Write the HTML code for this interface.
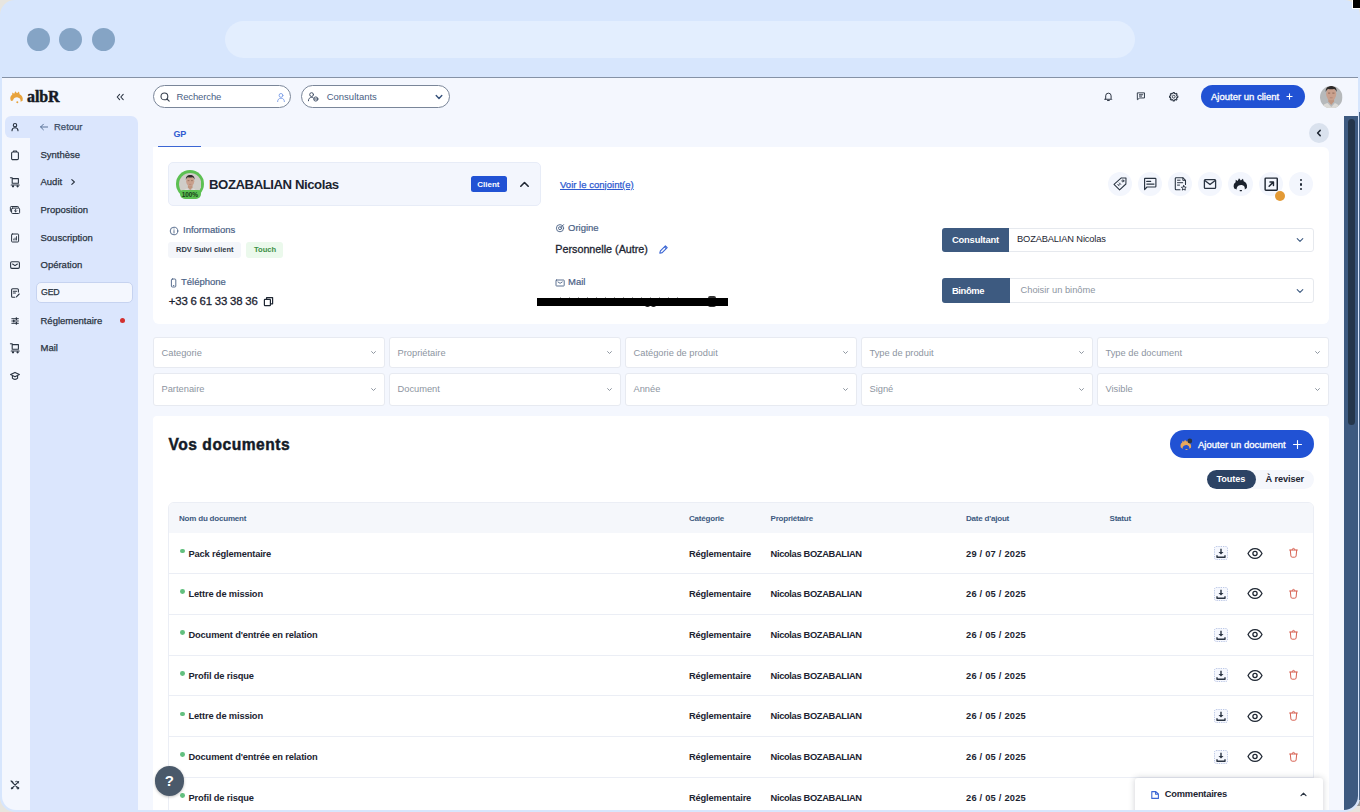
<!DOCTYPE html>
<html lang="fr">
<head>
<meta charset="utf-8">
<title>albR</title>
<style>
*{box-sizing:border-box;margin:0;padding:0}
html,body{width:1360px;height:812px;overflow:hidden;background:#e7e5df;font-family:"Liberation Sans",sans-serif;color:#1f2733}
.abs{position:absolute}
#win{left:0;top:0;width:1359.500px;height:811.500px;background:#d7e6fd;border-radius:15px 16px 15px 15px}
#chrome{left:0;top:0;width:1360px;height:77px}
.dot{position:absolute;top:27.5px;width:23px;height:23px;border-radius:50%;background:#85a4c5}
#url{left:225px;top:21px;width:910px;height:37px;border-radius:19px;background:#e3eefe}
#sep{left:2px;top:77px;width:1356px;height:1px;background:#8592a6}
#app{left:1.500px;top:78px;width:1356.500px;height:731.500px;background:#f4f7fe;border-radius:0 0 14px 14px;overflow:hidden}
/* everything inside #app is positioned with page coords via wrapper offset */
#pg{position:absolute;left:-1.500px;top:-78px;width:1360px;height:812px}
.t{position:absolute;white-space:nowrap;line-height:1}
.nav{font-size:9.500px;color:#2a3442;-webkit-text-stroke:.25px #2a3442}
.circ{position:absolute;top:172.300px;width:24.200px;height:24.200px;border-radius:50%;background:#f3f6fd}
.lbl{font-size:9.500px;color:#4a6185;-webkit-text-stroke:.2px #4a6185}
.flt{position:absolute;height:32.500px;background:#fff;border:1px solid #e7eaf1;border-radius:3px}
.th{font-size:8px;font-weight:700;color:#3d5a80;letter-spacing:-.2px;margin-top:.6px}
.td{font-size:9.300px;font-weight:700;color:#1c2431;letter-spacing:-.15px}
</style>
</head>
<body>
<div class="abs" style="left:1340px;top:792px;width:20px;height:14px;background:#9b9b99"></div>
<div id="win" class="abs"></div>
<div class="abs" style="left:1359.200px;top:112px;width:1px;height:688px;background:#4a668a"></div>
<div class="abs" style="left:1351.500px;top:-1px;width:10px;height:9.500px;background:#000;border:.700px solid #fff"></div>
<div id="chrome" class="abs">
  <div class="dot" style="left:26.5px"></div>
  <div class="dot" style="left:59px"></div>
  <div class="dot" style="left:92px"></div>
  <div id="url" class="abs"></div>
</div>
<div id="sep" class="abs"></div>
<div id="app" class="abs"><div id="pg">
<!--SIDEBAR-->
<div class="abs" style="left:30px;top:116px;width:108px;height:700px;background:#dbe6fd;border-radius:0 7px 0 0"></div>
<div class="abs" style="left:5px;top:116px;width:30px;height:22px;background:#dbe6fd;border-radius:6px 0 0 6px"></div>
<!-- logo -->
<svg class="abs" style="left:8.500px;top:88.500px" width="17" height="16" viewBox="0 0 17 16"><path d="M2 12c-1.400-2.600-.6-5 1.200-6.200l.1-2.300 1.900 1.200 1.100-2.500 1.700 2.100 2-1.700.6 2.600c2.400.9 3.700 3.400 3 6.500l-2 1c.3-2.400-.8-4-2.900-4.300-2.200-.3-4.200.8-4.700 3.100z" fill="#e8a33d"/><circle cx="8.300" cy="13.200" r="1" fill="#e8a33d"/></svg>
<div class="t" style="left:27px;top:88.500px;font-family:'Liberation Serif',serif;font-weight:700;font-size:16px;color:#151a24;letter-spacing:-.1px;-webkit-text-stroke:.45px #151a24">albR</div>
<svg class="abs" style="left:115px;top:92px" width="10" height="10" viewBox="0 0 10 10" fill="none" stroke="#2a3442" stroke-width="1.100" stroke-linecap="round" stroke-linejoin="round"><path d="M4.600 2.400 2.200 5l2.400 2.600M8.200 2.400 5.800 5l2.400 2.600"/></svg>
<!-- icon column -->
<g></g>
<svg class="abs" style="left:9px;top:121px" width="12" height="12" viewBox="0 0 12 12" fill="none" stroke="#2a3442" stroke-width="1.100" stroke-linecap="round"><circle cx="6" cy="4.200" r="1.700"/><path d="M3 9.800c0-2 1.300-3 3-3s3 1 3 3"/></svg>
<svg class="abs" style="left:9px;top:148.500px" width="12" height="12" viewBox="0 0 12 12" fill="none" stroke="#2a3442" stroke-width="1.100" stroke-linejoin="round"><rect x="2.600" y="3" width="6.800" height="7.600" rx="1.200"/><path d="M4.500 3V2h3v1"/></svg>
<svg class="abs" style="left:9px;top:176px" width="12" height="12" viewBox="0 0 12 12" fill="none" stroke="#2a3442" stroke-width="1.100" stroke-linecap="round" stroke-linejoin="round"><path d="M1.400 1.800h1.800v5.400h6.200V2.600H3.200M2.200 9h8"/><circle cx="4" cy="10.300" r=".6" fill="#2a3442"/><circle cx="8.600" cy="10.300" r=".6" fill="#2a3442"/></svg>
<svg class="abs" style="left:9px;top:204px" width="12" height="12" viewBox="0 0 12 12" fill="none" stroke="#2a3442" stroke-width="1" stroke-linecap="round" stroke-linejoin="round"><path d="M2.200 7.600c-.5 0-.8-.3-.8-.8V3.300c0-.5.300-.8.800-.8h6.600c.5 0 .8.300.8.800"/><rect x="2.600" y="4.100" width="8" height="5.400" rx="1"/><path d="M6.600 5.400v2.400M5.400 6.700l1.200 1.200 1.200-1.200" stroke-width=".9"/></svg>
<svg class="abs" style="left:9px;top:231.500px" width="12" height="12" viewBox="0 0 12 12" fill="none" stroke="#2a3442" stroke-width="1" stroke-linecap="round" stroke-linejoin="round"><rect x="2.600" y="2" width="7" height="8" rx=".7"/><path d="M4.800 8V7M6.100 8V6M7.500 8V4.600" stroke-width=".9"/></svg>
<svg class="abs" style="left:9px;top:259px" width="12" height="12" viewBox="0 0 12 12" fill="none" stroke="#2a3442" stroke-width="1.100" stroke-linecap="round" stroke-linejoin="round"><rect x="1.600" y="2.800" width="8.800" height="6.600" rx="1.300"/><path d="M3.600 5l2.400 1.600L8.400 5"/></svg>
<svg class="abs" style="left:9px;top:287px" width="12" height="12" viewBox="0 0 12 12" fill="none" stroke="#2a3442" stroke-width="1.100" stroke-linecap="round" stroke-linejoin="round"><path d="M9.400 5V2.800c0-.6-.4-1-1-1H3.600c-.6 0-1 .4-1 1v6.400c0 .6.400 1 1 1h2.200M4.400 4.200h3.200M4.400 6h2M7.400 9.800l2.800-2.800"/></svg>
<svg class="abs" style="left:9px;top:314.500px" width="12" height="12" viewBox="0 0 12 12" fill="none" stroke="#2a3442" stroke-width="1.100" stroke-linecap="round"><path d="M2.800 3.700h6.600M2.800 6h6.600M2.800 8.300h6.600" stroke-width="1"/><path d="M7.400 2.900v1.600M4.800 5.200v1.600M7.400 7.500v1.600" stroke-width="1.500"/></svg>
<svg class="abs" style="left:9px;top:342px" width="12" height="12" viewBox="0 0 12 12" fill="none" stroke="#2a3442" stroke-width="1.100" stroke-linecap="round" stroke-linejoin="round"><path d="M1.400 1.800h1.800v5.400h6.200V2.600H3.200M2.200 9h8"/><circle cx="4" cy="10.300" r=".6" fill="#2a3442"/><circle cx="8.600" cy="10.300" r=".6" fill="#2a3442"/></svg>
<svg class="abs" style="left:9px;top:370px" width="12" height="12" viewBox="0 0 12 12" fill="none" stroke="#2a3442" stroke-width="1.100" stroke-linecap="round" stroke-linejoin="round"><path d="M6 2.400 1.600 4.600 6 6.800l4.400-2.200zM3.400 5.600v2.600c.6.800 1.600 1.200 2.600 1.200s2-.4 2.600-1.200V5.600"/></svg>
<svg class="abs" style="left:9px;top:779px" width="12" height="12" viewBox="0 0 12 12" fill="none" stroke="#2a3442" stroke-width="1.200" stroke-linecap="round" stroke-linejoin="round"><path d="M2.400 2.400l7 7.200M9.600 2.600 2.600 9.600"/><path d="M6.600 2.600c1.200-.8 2.800-.2 3 1.400" stroke-width="1"/><path d="M2 2l1.600.4.400 1.600" stroke-width="1"/><circle cx="8.800" cy="9" r=".9" stroke-width=".9"/><circle cx="3" cy="9.200" r=".7" stroke-width=".9"/></svg>
<!-- nav items -->
<svg class="abs" style="left:39px;top:122px" width="10" height="10" viewBox="0 0 10 10" fill="none" stroke="#5a7397" stroke-width="1" stroke-linecap="round" stroke-linejoin="round"><path d="M8.600 5H1.600M4.400 2.200 1.600 5l2.800 2.800"/></svg>
<div class="t nav" style="left:54px;top:122px;color:#4a6185;font-weight:400">Retour</div>
<div class="t nav" style="left:40.500px;top:149.500px">Synthèse</div>
<div class="t nav" style="left:40.500px;top:177px">Audit</div>
<svg class="abs" style="left:69px;top:178px" width="8" height="8" viewBox="0 0 8 8" fill="none" stroke="#2a3442" stroke-width="1.100" stroke-linecap="round" stroke-linejoin="round"><path d="M2.800 1.600 5.400 4 2.800 6.400"/></svg>
<div class="t nav" style="left:40.500px;top:205px">Proposition</div>
<div class="t nav" style="left:40.500px;top:232.500px">Souscription</div>
<div class="t nav" style="left:40.500px;top:260px">Opération</div>
<div class="abs" style="left:35.700px;top:281.900px;width:97.600px;height:21.600px;background:#f4f7fe;border:1px solid #c6d3f0;border-radius:5px"></div>
<div class="t nav" style="left:41px;top:288.300px;font-size:8.800px;letter-spacing:-.2px">GED</div>
<div class="t nav" style="left:40.500px;top:315.500px">Réglementaire</div>
<div class="abs" style="left:120.300px;top:318px;width:5px;height:5px;border-radius:50%;background:#d3302f"></div>
<div class="t nav" style="left:40.500px;top:343px">Mail</div>

<!--HEADER-->
<div class="abs" style="left:153px;top:85px;width:138px;height:23px;border:1px solid #7a8699;border-radius:12px;background:#fff"></div>
<svg class="abs" style="left:159px;top:91px" width="12" height="12" viewBox="0 0 12 12" fill="none" stroke="#343e4c" stroke-width="1.100" stroke-linecap="round"><circle cx="5.400" cy="5.400" r="3.400"/><path d="M8 8l2.200 2.200"/></svg>
<div class="t" style="left:176.400px;top:92px;font-size:9.500px;color:#4a6185;letter-spacing:-.12px">Recherche</div>
<svg class="abs" style="left:276px;top:91.500px" width="10" height="11" viewBox="0 0 10 11" fill="none" stroke="#86a5e8" stroke-width="1" stroke-linecap="round"><circle cx="5" cy="3.400" r="1.900"/><path d="M1.600 9.600c0-2.200 1.500-3.400 3.400-3.400s3.400 1.200 3.400 3.400"/></svg>
<div class="abs" style="left:300.500px;top:85px;width:149px;height:23px;border:1px solid #7a8699;border-radius:12px;background:#fff"></div>
<svg class="abs" style="left:307px;top:91px" width="13" height="12" viewBox="0 0 13 12" fill="none" stroke="#445268" stroke-width="1" stroke-linecap="round"><circle cx="4.600" cy="3.600" r="1.900"/><path d="M1.400 9.800c0-2.200 1.400-3.400 3.200-3.400.6 0 1.200.1 1.600.4"/><circle cx="8.800" cy="8" r="2.100"/><path d="M7.400 8h2.800"/></svg>
<div class="t" style="left:326.700px;top:91.800px;font-size:9.500px;color:#4a6185">Consultants</div>
<svg class="abs" style="left:433.500px;top:91.700px" width="10" height="10" viewBox="0 0 10 10" fill="none" stroke="#34507a" stroke-width="1.400" stroke-linecap="round" stroke-linejoin="round"><path d="M2.200 3.600 5 6.400l2.800-2.800"/></svg>
<!-- right icons -->
<svg class="abs" style="left:1102.500px;top:91.400px" width="10.800" height="10.800" viewBox="0 0 12 12" fill="none" stroke="#2a3442" stroke-width="1.100" stroke-linecap="round" stroke-linejoin="round"><path d="M3 8.400V5.400a3 3 0 0 1 6 0v3l.8.800H2.200zM5 10.600h2"/></svg>
<svg class="abs" style="left:1136.100px;top:91.400px" width="10.200" height="10.200" viewBox="0 0 12 12" fill="none" stroke="#2a3442" stroke-width="1.100" stroke-linecap="round" stroke-linejoin="round"><path d="M2 2.200h8v6H4.400L2 10zM4 4.400h4M4 6h2.600"/></svg>
<svg class="abs" style="left:1167.500px;top:90.500px" width="12" height="12" viewBox="0 0 12 12" fill="none" stroke="#2a3442" stroke-width="1.050" stroke-linejoin="round"><path d="M9.85 5.04L9.85 6.36L8.91 6.47L8.51 7.42L9.10 8.17L8.17 9.10L7.42 8.51L6.47 8.91L6.36 9.85L5.04 9.85L4.93 8.91L3.98 8.51L3.23 9.10L2.30 8.17L2.89 7.42L2.49 6.47L1.55 6.36L1.55 5.04L2.49 4.93L2.89 3.98L2.30 3.23L3.23 2.30L3.98 2.89L4.93 2.49L5.04 1.55L6.36 1.55L6.47 2.49L7.42 2.89L8.17 2.30L9.10 3.23L8.51 3.98L8.91 4.93z"/><circle cx="5.700" cy="5.700" r="1.400" stroke-width=".9"/></svg>
<div class="abs" style="left:1201px;top:85.200px;width:104px;height:22.700px;border-radius:12px;background:#2152d4"></div>
<div class="t" style="left:1211px;top:91.500px;font-size:9.500px;color:#fff;-webkit-text-stroke:.3px #fff">Ajouter un client</div>
<svg class="abs" style="left:1285px;top:92px" width="9" height="9" viewBox="0 0 9 9" fill="none" stroke="#fff" stroke-width="1.100" stroke-linecap="round"><path d="M4.500 1.900v5.200M1.900 4.500h5.200"/></svg>
<!-- avatar -->
<svg class="abs" style="left:1320.300px;top:85.500px" width="22.500" height="22.500" viewBox="0 0 22.5 22.5"><defs><clipPath id="av1"><circle cx="11.250" cy="11.250" r="11.250"/></clipPath><filter id="av1b"><feGaussianBlur stdDeviation=".45"/></filter></defs><g clip-path="url(#av1)"><rect width="22.500" height="22.500" fill="#b6b9bb"/><g filter="url(#av1b)" transform="translate(0 -1.500)"><path d="M2.500 25c.3-5.500 2.200-5.600 5.200-6.600l3.600 4 3.600-4c3 1 4.900 3.100 5.200 6.600z" fill="#dcdad6"/><path d="M8.300 13.500h5.800v3.500l-2.900 3.600-2.900-3.600z" fill="#bf957f"/><ellipse cx="11.200" cy="9.300" rx="5.100" ry="6.500" fill="#c9a08d"/><path d="M5.800 7.400c-.4-3.600 1.800-5.900 5.400-5.900s5.900 2.300 5.400 5.900c-.6-1.900-1.500-2.700-2.600-3-1.700.5-3.900.5-5.600 0-1.100.3-2 1.100-2.600 3z" fill="#2e2a29"/><path d="M8 8.600h2.200M12.300 8.600h2.200" stroke="#6b4a3c" stroke-width=".9" opacity=".7"/><path d="M9.800 13.300h2.800" stroke="#9c6b5a" stroke-width=".7" opacity=".7"/></g></g></svg>
<!-- tab -->
<div class="t" style="left:173.600px;top:130.400px;font-size:9px;font-weight:700;color:#2f5bd0;letter-spacing:-.3px">GP</div>
<div class="abs" style="left:158px;top:145.500px;width:43px;height:1.500px;background:#3b66d4"></div>
<div class="abs" style="left:1308.500px;top:123px;width:20px;height:20px;border-radius:50%;background:#dae2ee"></div>
<svg class="abs" style="left:1313.500px;top:128px" width="10" height="10" viewBox="0 0 10 10" fill="none" stroke="#1f2733" stroke-width="1.500" stroke-linecap="round" stroke-linejoin="round"><path d="M6.200 2.400 3.600 5l2.600 2.600"/></svg>

<!--CARD1-->
<div class="abs" style="left:153px;top:147px;width:1176px;height:176.500px;background:#fff;border-radius:0 6px 6px 6px"></div>
<div class="abs" style="left:168px;top:162px;width:372.500px;height:43.500px;background:#f3f6fd;border:1px solid #e7ecf7;border-radius:5px"></div>
<!-- avatar with ring -->
<div class="abs" style="left:176px;top:170px;width:28px;height:28px;border-radius:50%;background:#5cc052"></div>
<svg class="abs" style="left:178.800px;top:172.600px" width="22.400" height="22.400" viewBox="0 0 22.5 22.5"><defs><clipPath id="av2"><circle cx="11.250" cy="11.250" r="11.250"/></clipPath><filter id="av2b"><feGaussianBlur stdDeviation=".45"/></filter></defs><g clip-path="url(#av2)"><rect width="22.500" height="22.500" fill="#cfccc8"/><g filter="url(#av2b)" transform="translate(2.300 .8) scale(.8)"><path d="M2.500 25c.3-5.500 2.200-5.600 5.200-6.600l3.600 4 3.600-4c3 1 4.900 3.100 5.200 6.600z" fill="#dcdad6"/><path d="M8.300 13.500h5.800v3.500l-2.900 3.600-2.900-3.600z" fill="#bf957f"/><ellipse cx="11.200" cy="9.300" rx="5.100" ry="6.500" fill="#c9a08d"/><path d="M5.800 7.400c-.4-3.600 1.800-5.900 5.400-5.900s5.900 2.300 5.400 5.900c-.6-1.900-1.500-2.700-2.600-3-1.700.5-3.900.5-5.600 0-1.100.3-2 1.100-2.600 3z" fill="#2e2a29"/><path d="M8 8.600h2.200M12.300 8.600h2.200" stroke="#6b4a3c" stroke-width=".9" opacity=".7"/><path d="M9.800 13.300h2.800" stroke="#9c6b5a" stroke-width=".7" opacity=".7"/></g></g></svg>
<div class="abs" style="left:179.800px;top:190.300px;width:20.800px;height:9px;border-radius:3px 3px 5px 5px;background:#5cc052"></div>
<div class="t" style="left:181.800px;top:191.500px;font-size:6.500px;font-weight:700;color:#17401a;letter-spacing:-.1px">100%</div>
<div class="t" style="left:209px;top:177.500px;font-size:13.200px;font-weight:700;color:#1c2431;letter-spacing:-.45px">BOZABALIAN Nicolas</div>
<div class="abs" style="left:470.500px;top:176px;width:36.500px;height:16px;border-radius:2.500px;background:#2152d4"></div>
<div class="t" style="left:477.300px;top:180.500px;font-size:8px;font-weight:700;color:#fff">Client</div>
<svg class="abs" style="left:518px;top:178px" width="13" height="13" viewBox="0 0 13 13" fill="none" stroke="#1f2733" stroke-width="1.600" stroke-linecap="round" stroke-linejoin="round"><path d="M2.800 8.200 6.500 4.500l3.700 3.700"/></svg>
<div class="t" style="left:560px;top:179.700px;font-size:9.550px;color:#2f5bd0;text-decoration:underline;-webkit-text-stroke:.25px #2f5bd0">Voir le conjoint(e)</div>
<!-- action circles -->
<div class="circ" style="left:1108px"></div><div class="circ" style="left:1138px"></div><div class="circ" style="left:1168.200px"></div><div class="circ" style="left:1198.300px"></div><div class="circ" style="left:1228.400px"></div><div class="circ" style="left:1258.700px"></div><div class="circ" style="left:1288.800px"></div>
<svg class="abs" style="left:1113px;top:177px" width="14" height="14" viewBox="0 0 14 14" fill="none" stroke="#2a3442" stroke-width="1.050" stroke-linejoin="round" stroke-linecap="round"><path d="M1 7.300 8.300.9l4.700.1-.1 6L6.600 12.900z"/><circle cx="9.900" cy="3.900" r="1" stroke-width=".9"/><path d="M4.700 7.300l1.500 1.600M6.300 5.900l1.500 1.600M5.500 8.100l1.500-1.400" stroke-width=".8"/></svg>
<svg class="abs" style="left:1143px;top:177px" width="14" height="14" viewBox="0 0 14 14" fill="none" stroke="#2a3442" stroke-width="1.150" stroke-linejoin="round" stroke-linecap="round"><path d="M1.800 1.300h10.400c.4 0 .7.300.7.700v7.300c0 .4-.3.700-.7.700H4L1.600 12.600V2c0-.4.100-.7.200-.7z"/><path d="M3.800 4.400h3.800" stroke-width="1.300"/><path d="M3.800 7.100h7.200"/></svg>
<svg class="abs" style="left:1173px;top:177px" width="14" height="14" viewBox="0 0 14 14" fill="none" stroke="#2a3442" stroke-width="1.100" stroke-linejoin="round" stroke-linecap="round"><path d="M7 12.700H3c-.4 0-.7-.3-.7-.700V1.400c0-.4.300-.7.700-.7h6.800l2.700 2.700v4"/><path d="M9.800.9v2.500h2.500" stroke-width=".9"/><path d="M4.500 3.200h2.600M4.500 5.700h5.200M4.500 8.100h2" stroke-width="1"/><path d="M10.80 8.60L11.53 10.09L13.18 10.33L11.99 11.49L12.27 13.12L10.80 12.35L9.33 13.12L9.61 11.49L8.42 10.33L10.07 10.09z" stroke-width=".95"/></svg>
<svg class="abs" style="left:1203.300px;top:177px" width="14" height="14" viewBox="0 0 14 14" fill="none" stroke="#2a3442" stroke-width="1.300" stroke-linejoin="round" stroke-linecap="round"><rect x="1.400" y="2.600" width="11.200" height="8.800" rx="1"/><path d="M1.800 3.400 7 7.600l5.200-4.200"/></svg>
<svg class="abs" style="left:1231.700px;top:175.800px" width="17.500" height="17.500" viewBox="0 0 16 16"><path d="M2 11.400c-1.100-2.600-.3-4.800 1.300-5.800l.1-2.100 1.800 1.100L6.400 2l1.700 2.100 1.900-1.700.7 2.500c2.300.8 3.500 3.100 2.900 6.100l-1.900 1.300c.3-2.400-.8-3.900-2.800-4.100-2.200-.2-4 .7-4.600 3-.1.400 0 .8.100 1.200z" fill="#1b222d"/><path d="M6.900 13.700c.7.400 1.600.4 2.300 0l-.3-.9H7.200z" fill="#1b222d"/></svg>
<svg class="abs" style="left:1263.600px;top:176.700px" width="14.400" height="14.400" viewBox="0 0 14 14" fill="none" stroke="#1f2733" stroke-width="1.400" stroke-linejoin="round" stroke-linecap="round"><rect x="1.100" y="1.100" width="11.800" height="11.800" rx=".7"/><path d="M5 9l4-4M5.800 4.800h3.400v3.400"/></svg>
<div class="abs" style="left:1299.700px;top:178.700px;width:2.600px;height:2.600px;border-radius:50%;background:#1f2733"></div>
<div class="abs" style="left:1299.700px;top:183.100px;width:2.600px;height:2.600px;border-radius:50%;background:#1f2733"></div>
<div class="abs" style="left:1299.700px;top:187.700px;width:2.600px;height:2.600px;border-radius:50%;background:#1f2733"></div>
<div class="abs" style="left:1274.700px;top:190.500px;width:10px;height:10px;border-radius:50%;background:#e39a35"></div>
<!-- info col 1 -->
<svg class="abs" style="left:168.500px;top:225.500px" width="10" height="10" viewBox="0 0 10 10" fill="none" stroke="#4a6185" stroke-width=".9" stroke-linecap="round"><circle cx="5" cy="5" r="3.800"/><path d="M5 4.600v2.400M5 3v.1"/></svg>
<div class="t lbl" style="left:183px;top:224.700px">Informations</div>
<div class="abs" style="left:168px;top:241.800px;width:73px;height:15.800px;border-radius:3px;background:#f4f6fa"></div>
<div class="t" style="left:176px;top:246.200px;font-size:7.500px;font-weight:700;color:#2f3947">RDV Suivi client</div>
<div class="abs" style="left:246px;top:241.800px;width:37px;height:15.800px;border-radius:3px;background:#ebf9ec"></div>
<div class="t" style="left:254px;top:246.200px;font-size:7.600px;font-weight:700;color:#3d8f45">Touch</div>
<svg class="abs" style="left:168.500px;top:277.500px" width="9" height="10" viewBox="0 0 9 10" fill="none" stroke="#4a6185" stroke-width=".9" stroke-linecap="round"><rect x="2.400" y="1" width="4.400" height="8" rx="1"/><path d="M4.300 7.600h.6"/></svg>
<div class="t lbl" style="left:181px;top:276.800px">Téléphone</div>
<div class="t" style="left:168.800px;top:295.500px;font-size:11.400px;color:#1c2431;-webkit-text-stroke:.3px #1c2431;letter-spacing:-.2px">+33 6 61 33 38 36</div>
<svg class="abs" style="left:262.500px;top:296px" width="11" height="11" viewBox="0 0 11 11" fill="none" stroke="#1f2733" stroke-width="1.200" stroke-linejoin="round"><rect x="1.400" y="3.400" width="6" height="6.200" rx=".6"/><path d="M3.600 3.400V1.600h6v6.200H7.400"/></svg>
<!-- info col 2 -->
<svg class="abs" style="left:555px;top:222.500px" width="10" height="10" viewBox="0 0 10 10" fill="none" stroke="#4a6185" stroke-width=".9" stroke-linecap="round" stroke-linejoin="round"><circle cx="5" cy="5.200" r="3.600"/><circle cx="5" cy="5.200" r="1.500"/><path d="M5.800 4.400 8.600 1.600"/></svg>
<div class="t lbl" style="left:568px;top:223px">Origine</div>
<div class="t" style="left:555.300px;top:244.100px;font-size:10.750px;color:#1c2431;-webkit-text-stroke:.3px #1c2431">Personnelle (Autre)</div>
<svg class="abs" style="left:658px;top:244px" width="11" height="11" viewBox="0 0 11 11" fill="none" stroke="#3b66d4" stroke-width="1.100" stroke-linejoin="round" stroke-linecap="round"><path d="M1.800 9.200l.6-2.400 5-5 1.800 1.800-5 5zM6.400 2.800l1.800 1.800"/></svg>
<svg class="abs" style="left:555px;top:277.500px" width="10" height="10" viewBox="0 0 10 10" fill="none" stroke="#4a6185" stroke-width=".9" stroke-linecap="round" stroke-linejoin="round"><rect x="1" y="2" width="8.200" height="6" rx=".6"/><path d="M3 4l2.100 1.300L7.200 4"/></svg>
<div class="t lbl" style="left:568px;top:277.200px">Mail</div>
<div class="abs" style="left:537px;top:298.300px;width:191px;height:7.800px;background:#000"></div>
<div class="abs" style="left:645px;top:304px;width:4.500px;height:3px;border-radius:0 0 2px 2px;background:#000;opacity:.85"></div>
<div class="abs" style="left:651px;top:304px;width:4.500px;height:3px;border-radius:0 0 2px 2px;background:#000;opacity:.85"></div>
<div class="abs" style="left:708px;top:296.300px;width:8px;height:10.500px;border-radius:2px;background:#000;opacity:.8"></div>
<div class="abs" style="left:560px;top:296.800px;width:120px;height:1.500px;background:repeating-linear-gradient(90deg,rgba(0,0,0,.35) 0 1px,transparent 1px 9px)"></div>
<!-- consultant / binome -->
<div class="abs" style="left:942px;top:227.500px;width:371.500px;height:24px;border:1px solid #e6e9ee;border-radius:3px;background:#fff"></div>
<div class="abs" style="left:942px;top:227.500px;width:66.700px;height:24px;border-radius:3px 0 0 3px;background:#3d5a80"></div>
<div class="t" style="left:952px;top:234.600px;font-size:9.400px;font-weight:700;color:#fff;letter-spacing:-.2px">Consultant</div>
<div class="t" style="left:1017px;top:234.500px;font-size:9.300px;color:#1c2431;letter-spacing:-.15px">BOZABALIAN Nicolas</div>
<svg class="abs" style="left:1295px;top:234.500px" width="10" height="10" viewBox="0 0 10 10" fill="none" stroke="#3d5a80" stroke-width="1.100" stroke-linecap="round" stroke-linejoin="round"><path d="M2.200 3.600 5 6.400l2.800-2.800"/></svg>
<div class="abs" style="left:942px;top:278px;width:371.500px;height:24.500px;border:1px solid #e6e9ee;border-radius:3px;background:#fff"></div>
<div class="abs" style="left:942px;top:278px;width:67.700px;height:24.500px;border-radius:3px 0 0 3px;background:#3d5a80"></div>
<div class="t" style="left:952px;top:285.700px;font-size:9.400px;font-weight:700;color:#fff;letter-spacing:-.4px">Binôme</div>
<div class="t" style="left:1020.500px;top:285.500px;font-size:9.300px;color:#8d959f">Choisir un binôme</div>
<svg class="abs" style="left:1295px;top:285.500px" width="10" height="10" viewBox="0 0 10 10" fill="none" stroke="#3d5a80" stroke-width="1.100" stroke-linecap="round" stroke-linejoin="round"><path d="M2.200 3.600 5 6.400l2.800-2.800"/></svg>

<!--FILTERS-->
<div class="flt" style="left:153px;top:336.700px;height:31.800px;width:231.5px"></div>
<div class="t" style="left:161.5px;top:348.6px;font-size:9.300px;color:#8d959f">Categorie</div>
<svg class="abs" style="left:369.5px;top:349px" width="7" height="7" viewBox="0 0 7 7" fill="none" stroke="#8d959f" stroke-width="1" stroke-linecap="round" stroke-linejoin="round"><path d="M1.600 2.600 3.500 4.500l1.900-1.900"/></svg>
<div class="flt" style="left:389px;top:336.700px;height:31.800px;width:231.5px"></div>
<div class="t" style="left:397.5px;top:348.6px;font-size:9.300px;color:#8d959f">Propriétaire</div>
<svg class="abs" style="left:605.5px;top:349px" width="7" height="7" viewBox="0 0 7 7" fill="none" stroke="#8d959f" stroke-width="1" stroke-linecap="round" stroke-linejoin="round"><path d="M1.600 2.600 3.500 4.500l1.900-1.900"/></svg>
<div class="flt" style="left:625px;top:336.700px;height:31.800px;width:231.5px"></div>
<div class="t" style="left:633.5px;top:348.6px;font-size:9.300px;color:#8d959f">Catégorie de produit</div>
<svg class="abs" style="left:841.5px;top:349px" width="7" height="7" viewBox="0 0 7 7" fill="none" stroke="#8d959f" stroke-width="1" stroke-linecap="round" stroke-linejoin="round"><path d="M1.600 2.600 3.500 4.500l1.900-1.900"/></svg>
<div class="flt" style="left:861px;top:336.700px;height:31.800px;width:231.5px"></div>
<div class="t" style="left:869.5px;top:348.6px;font-size:9.300px;color:#8d959f">Type de produit</div>
<svg class="abs" style="left:1077.5px;top:349px" width="7" height="7" viewBox="0 0 7 7" fill="none" stroke="#8d959f" stroke-width="1" stroke-linecap="round" stroke-linejoin="round"><path d="M1.600 2.600 3.500 4.500l1.900-1.900"/></svg>
<div class="flt" style="left:1097px;top:336.700px;height:31.800px;width:232px"></div>
<div class="t" style="left:1105.5px;top:348.6px;font-size:9.300px;color:#8d959f">Type de document</div>
<svg class="abs" style="left:1314px;top:349px" width="7" height="7" viewBox="0 0 7 7" fill="none" stroke="#8d959f" stroke-width="1" stroke-linecap="round" stroke-linejoin="round"><path d="M1.600 2.600 3.500 4.500l1.900-1.900"/></svg>
<div class="flt" style="left:153px;top:373.0px;width:231.5px"></div>
<div class="t" style="left:161.5px;top:385.0px;font-size:9.300px;color:#8d959f">Partenaire</div>
<svg class="abs" style="left:369.5px;top:386px" width="7" height="7" viewBox="0 0 7 7" fill="none" stroke="#8d959f" stroke-width="1" stroke-linecap="round" stroke-linejoin="round"><path d="M1.600 2.600 3.500 4.500l1.900-1.900"/></svg>
<div class="flt" style="left:389px;top:373.0px;width:231.5px"></div>
<div class="t" style="left:397.5px;top:385.0px;font-size:9.300px;color:#8d959f">Document</div>
<svg class="abs" style="left:605.5px;top:386px" width="7" height="7" viewBox="0 0 7 7" fill="none" stroke="#8d959f" stroke-width="1" stroke-linecap="round" stroke-linejoin="round"><path d="M1.600 2.600 3.500 4.500l1.900-1.900"/></svg>
<div class="flt" style="left:625px;top:373.0px;width:231.5px"></div>
<div class="t" style="left:633.5px;top:385.0px;font-size:9.300px;color:#8d959f">Année</div>
<svg class="abs" style="left:841.5px;top:386px" width="7" height="7" viewBox="0 0 7 7" fill="none" stroke="#8d959f" stroke-width="1" stroke-linecap="round" stroke-linejoin="round"><path d="M1.600 2.600 3.500 4.500l1.900-1.900"/></svg>
<div class="flt" style="left:861px;top:373.0px;width:231.5px"></div>
<div class="t" style="left:869.5px;top:385.0px;font-size:9.300px;color:#8d959f">Signé</div>
<svg class="abs" style="left:1077.5px;top:386px" width="7" height="7" viewBox="0 0 7 7" fill="none" stroke="#8d959f" stroke-width="1" stroke-linecap="round" stroke-linejoin="round"><path d="M1.600 2.600 3.500 4.500l1.900-1.900"/></svg>
<div class="flt" style="left:1097px;top:373.0px;width:232px"></div>
<div class="t" style="left:1105.5px;top:385.0px;font-size:9.300px;color:#8d959f">Visible</div>
<svg class="abs" style="left:1314px;top:386px" width="7" height="7" viewBox="0 0 7 7" fill="none" stroke="#8d959f" stroke-width="1" stroke-linecap="round" stroke-linejoin="round"><path d="M1.600 2.600 3.500 4.500l1.900-1.900"/></svg>

<!--DOCS-->
<div class="abs" style="left:153px;top:416px;width:1176px;height:400px;background:#fff;border-radius:4px 4px 0 0"></div>
<div class="t" style="left:168.500px;top:436.700px;font-size:15.600px;font-weight:700;color:#141b27;letter-spacing:.52px;-webkit-text-stroke:.45px #141b27">Vos documents</div>
<div class="abs" style="left:1170px;top:430.300px;width:144px;height:27.800px;border-radius:14px;background:#2152d4"></div>
<svg class="abs" style="left:1179px;top:436.500px" width="15" height="15" viewBox="0 0 15 15"><path d="M1.800 10.600c-.8-2.200 0-4.200 1.400-5l.2-1.800 1.600 1 1-2 1.400 1.800 1.800-1.400.4 2.200c2 .8 3 2.800 2.400 5.400l-1.600 1c.2-2-.8-3.600-2.600-3.800-2-.2-3.600.8-4.200 2.800 0 .4 0 .8.200 1.200z" fill="#e8a85c"/><circle cx="10.800" cy="4" r="2.400" fill="#2a3442"/><path d="M6.400 12.800c.6.400 1.600.4 2.200 0l-.2-.8H6.600z" fill="#e8a85c"/></svg>
<div class="t" style="left:1198px;top:439.500px;font-size:9.500px;color:#fff;-webkit-text-stroke:.3px #fff">Ajouter un document</div>
<svg class="abs" style="left:1291.500px;top:438.500px" width="11" height="11" viewBox="0 0 11 11" fill="none" stroke="#fff" stroke-width="1.100" stroke-linecap="round"><path d="M5.500 1.500v8M1.500 5.500h8"/></svg>
<div class="abs" style="left:1207px;top:470.400px;width:107px;height:18.200px;border-radius:9.500px;background:#f5f7fc"></div>
<div class="abs" style="left:1207px;top:470.400px;width:49px;height:18.200px;border-radius:9.500px;background:#2c4364"></div>
<div class="t" style="left:1216.500px;top:474.700px;font-size:9.200px;font-weight:700;color:#fff;letter-spacing:-.1px">Toutes</div>
<div class="t" style="left:1265.500px;top:474.700px;font-size:9.200px;font-weight:700;color:#1c2431;letter-spacing:-.1px">À reviser</div>
<!-- table -->
<div class="abs" style="left:168px;top:501.500px;width:1146px;height:320px;border:1px solid #ebeef5;border-radius:6px 6px 0 0;overflow:hidden"><div class="abs" style="left:0;top:0;width:1146px;height:30.800px;background:#f5f7fb"></div></div>
<div class="t th" style="left:179px;top:514px">Nom du document</div>
<div class="t th" style="left:689px;top:514px">Catégorie</div>
<div class="t th" style="left:770.500px;top:514px">Propriétaire</div>
<div class="t th" style="left:966px;top:514px">Date d'ajout</div>
<div class="t th" style="left:1109.500px;top:514px">Statut</div>
<div class="abs" style="left:180.400px;top:548.7px;width:4.800px;height:4.800px;border-radius:50%;background:#62c07f"></div>
<div class="t td" style="left:188.500px;top:549.5px">Pack réglementaire</div>
<div class="t td" style="left:689px;top:549.5px">Réglementaire</div>
<div class="t td" style="left:770.500px;top:549.5px;letter-spacing:-.33px">Nicolas BOZABALIAN</div>
<div class="t td" style="left:966px;top:549.5px;letter-spacing:.22px">29 / 07 / 2025</div>
<svg class="abs" style="left:1214px;top:546.1px" width="14" height="14" viewBox="0 0 14 14" fill="none"><rect x=".5" y=".5" width="13" height="13" rx="1.600" fill="#f6f8fe" stroke="#a3b3dc" stroke-width=".7" stroke-dasharray="1.300 1"/><path d="M7 2.800v4" stroke="#2a3442" stroke-width="1.400"/><path d="M4.500 5.900h5L7 8.500z" fill="#2a3442"/><path d="M3 9.200v2h8v-2" stroke="#2a3442" stroke-width="1.400" stroke-linejoin="round"/></svg>
<svg class="abs" style="left:1247px;top:545.7px" width="16" height="15" viewBox="0 0 16 15" fill="none" stroke="#1f2733" stroke-width="1.300" stroke-linejoin="round"><path d="M1 7.500C2.800 4 5.300 2.600 8 2.600S13.200 4 15 7.500C13.200 11 10.700 12.400 8 12.400S2.800 11 1 7.500z"/><circle cx="8" cy="7.500" r="2.100"/></svg>
<svg class="abs" style="left:1287.500px;top:547.1px" width="11" height="12" viewBox="0 0 11 12" fill="none" stroke="#d55a4a" stroke-width=".95" stroke-linecap="round" stroke-linejoin="round"><path d="M1.700 3h7.600M4.200 2.800c0-1 .5-1.400 1.300-1.400s1.300.4 1.300 1.400M2.300 3.200l.6 5.800c.1.800.6 1.200 1.300 1.200h2.600c.7 0 1.200-.4 1.300-1.200l.6-5.800"/></svg>
<div class="abs" style="left:169px;top:573.2px;width:1144px;height:1px;background:#ebeef5"></div>
<div class="abs" style="left:180.400px;top:589.4px;width:4.800px;height:4.800px;border-radius:50%;background:#62c07f"></div>
<div class="t td" style="left:188.500px;top:590.2px">Lettre de mission</div>
<div class="t td" style="left:689px;top:590.2px">Réglementaire</div>
<div class="t td" style="left:770.500px;top:590.2px;letter-spacing:-.33px">Nicolas BOZABALIAN</div>
<div class="t td" style="left:966px;top:590.2px;letter-spacing:.22px">26 / 05 / 2025</div>
<svg class="abs" style="left:1214px;top:586.8px" width="14" height="14" viewBox="0 0 14 14" fill="none"><rect x=".5" y=".5" width="13" height="13" rx="1.600" fill="#f6f8fe" stroke="#a3b3dc" stroke-width=".7" stroke-dasharray="1.300 1"/><path d="M7 2.800v4" stroke="#2a3442" stroke-width="1.400"/><path d="M4.500 5.900h5L7 8.500z" fill="#2a3442"/><path d="M3 9.200v2h8v-2" stroke="#2a3442" stroke-width="1.400" stroke-linejoin="round"/></svg>
<svg class="abs" style="left:1247px;top:586.4px" width="16" height="15" viewBox="0 0 16 15" fill="none" stroke="#1f2733" stroke-width="1.300" stroke-linejoin="round"><path d="M1 7.500C2.800 4 5.300 2.600 8 2.600S13.200 4 15 7.500C13.200 11 10.700 12.400 8 12.400S2.800 11 1 7.500z"/><circle cx="8" cy="7.500" r="2.100"/></svg>
<svg class="abs" style="left:1287.500px;top:587.8px" width="11" height="12" viewBox="0 0 11 12" fill="none" stroke="#d55a4a" stroke-width=".95" stroke-linecap="round" stroke-linejoin="round"><path d="M1.700 3h7.600M4.200 2.800c0-1 .5-1.400 1.300-1.400s1.300.4 1.300 1.400M2.300 3.200l.6 5.800c.1.800.6 1.200 1.300 1.200h2.600c.7 0 1.200-.4 1.300-1.200l.6-5.800"/></svg>
<div class="abs" style="left:169px;top:613.9px;width:1144px;height:1px;background:#ebeef5"></div>
<div class="abs" style="left:180.400px;top:630.1px;width:4.800px;height:4.800px;border-radius:50%;background:#62c07f"></div>
<div class="t td" style="left:188.500px;top:630.9px">Document d'entrée en relation</div>
<div class="t td" style="left:689px;top:630.9px">Réglementaire</div>
<div class="t td" style="left:770.500px;top:630.9px;letter-spacing:-.33px">Nicolas BOZABALIAN</div>
<div class="t td" style="left:966px;top:630.9px;letter-spacing:.22px">26 / 05 / 2025</div>
<svg class="abs" style="left:1214px;top:627.5px" width="14" height="14" viewBox="0 0 14 14" fill="none"><rect x=".5" y=".5" width="13" height="13" rx="1.600" fill="#f6f8fe" stroke="#a3b3dc" stroke-width=".7" stroke-dasharray="1.300 1"/><path d="M7 2.800v4" stroke="#2a3442" stroke-width="1.400"/><path d="M4.500 5.900h5L7 8.500z" fill="#2a3442"/><path d="M3 9.200v2h8v-2" stroke="#2a3442" stroke-width="1.400" stroke-linejoin="round"/></svg>
<svg class="abs" style="left:1247px;top:627.1px" width="16" height="15" viewBox="0 0 16 15" fill="none" stroke="#1f2733" stroke-width="1.300" stroke-linejoin="round"><path d="M1 7.500C2.800 4 5.300 2.600 8 2.600S13.200 4 15 7.500C13.200 11 10.700 12.400 8 12.400S2.800 11 1 7.500z"/><circle cx="8" cy="7.500" r="2.100"/></svg>
<svg class="abs" style="left:1287.500px;top:628.5px" width="11" height="12" viewBox="0 0 11 12" fill="none" stroke="#d55a4a" stroke-width=".95" stroke-linecap="round" stroke-linejoin="round"><path d="M1.700 3h7.600M4.200 2.800c0-1 .5-1.400 1.300-1.400s1.300.4 1.300 1.400M2.300 3.200l.6 5.800c.1.800.6 1.200 1.300 1.200h2.600c.7 0 1.200-.4 1.300-1.200l.6-5.800"/></svg>
<div class="abs" style="left:169px;top:654.6px;width:1144px;height:1px;background:#ebeef5"></div>
<div class="abs" style="left:180.400px;top:670.8px;width:4.800px;height:4.800px;border-radius:50%;background:#62c07f"></div>
<div class="t td" style="left:188.500px;top:671.6px">Profil de risque</div>
<div class="t td" style="left:689px;top:671.6px">Réglementaire</div>
<div class="t td" style="left:770.500px;top:671.6px;letter-spacing:-.33px">Nicolas BOZABALIAN</div>
<div class="t td" style="left:966px;top:671.6px;letter-spacing:.22px">26 / 05 / 2025</div>
<svg class="abs" style="left:1214px;top:668.2px" width="14" height="14" viewBox="0 0 14 14" fill="none"><rect x=".5" y=".5" width="13" height="13" rx="1.600" fill="#f6f8fe" stroke="#a3b3dc" stroke-width=".7" stroke-dasharray="1.300 1"/><path d="M7 2.800v4" stroke="#2a3442" stroke-width="1.400"/><path d="M4.500 5.900h5L7 8.500z" fill="#2a3442"/><path d="M3 9.200v2h8v-2" stroke="#2a3442" stroke-width="1.400" stroke-linejoin="round"/></svg>
<svg class="abs" style="left:1247px;top:667.8px" width="16" height="15" viewBox="0 0 16 15" fill="none" stroke="#1f2733" stroke-width="1.300" stroke-linejoin="round"><path d="M1 7.500C2.800 4 5.300 2.600 8 2.600S13.200 4 15 7.500C13.200 11 10.700 12.400 8 12.400S2.800 11 1 7.500z"/><circle cx="8" cy="7.500" r="2.100"/></svg>
<svg class="abs" style="left:1287.500px;top:669.2px" width="11" height="12" viewBox="0 0 11 12" fill="none" stroke="#d55a4a" stroke-width=".95" stroke-linecap="round" stroke-linejoin="round"><path d="M1.700 3h7.600M4.200 2.800c0-1 .5-1.400 1.300-1.400s1.300.4 1.300 1.400M2.300 3.200l.6 5.800c.1.800.6 1.200 1.300 1.200h2.600c.7 0 1.200-.4 1.300-1.200l.6-5.800"/></svg>
<div class="abs" style="left:169px;top:695.3px;width:1144px;height:1px;background:#ebeef5"></div>
<div class="abs" style="left:180.400px;top:711.5px;width:4.800px;height:4.800px;border-radius:50%;background:#62c07f"></div>
<div class="t td" style="left:188.500px;top:712.3px">Lettre de mission</div>
<div class="t td" style="left:689px;top:712.3px">Réglementaire</div>
<div class="t td" style="left:770.500px;top:712.3px;letter-spacing:-.33px">Nicolas BOZABALIAN</div>
<div class="t td" style="left:966px;top:712.3px;letter-spacing:.22px">26 / 05 / 2025</div>
<svg class="abs" style="left:1214px;top:708.9px" width="14" height="14" viewBox="0 0 14 14" fill="none"><rect x=".5" y=".5" width="13" height="13" rx="1.600" fill="#f6f8fe" stroke="#a3b3dc" stroke-width=".7" stroke-dasharray="1.300 1"/><path d="M7 2.800v4" stroke="#2a3442" stroke-width="1.400"/><path d="M4.500 5.900h5L7 8.500z" fill="#2a3442"/><path d="M3 9.200v2h8v-2" stroke="#2a3442" stroke-width="1.400" stroke-linejoin="round"/></svg>
<svg class="abs" style="left:1247px;top:708.5px" width="16" height="15" viewBox="0 0 16 15" fill="none" stroke="#1f2733" stroke-width="1.300" stroke-linejoin="round"><path d="M1 7.500C2.800 4 5.300 2.600 8 2.600S13.200 4 15 7.500C13.200 11 10.700 12.400 8 12.400S2.800 11 1 7.500z"/><circle cx="8" cy="7.500" r="2.100"/></svg>
<svg class="abs" style="left:1287.500px;top:709.9px" width="11" height="12" viewBox="0 0 11 12" fill="none" stroke="#d55a4a" stroke-width=".95" stroke-linecap="round" stroke-linejoin="round"><path d="M1.700 3h7.600M4.200 2.800c0-1 .5-1.400 1.300-1.400s1.300.4 1.300 1.400M2.300 3.200l.6 5.800c.1.800.6 1.200 1.300 1.200h2.600c.7 0 1.200-.4 1.300-1.200l.6-5.800"/></svg>
<div class="abs" style="left:169px;top:736.0px;width:1144px;height:1px;background:#ebeef5"></div>
<div class="abs" style="left:180.400px;top:752.2px;width:4.800px;height:4.800px;border-radius:50%;background:#62c07f"></div>
<div class="t td" style="left:188.500px;top:753.0px">Document d'entrée en relation</div>
<div class="t td" style="left:689px;top:753.0px">Réglementaire</div>
<div class="t td" style="left:770.500px;top:753.0px;letter-spacing:-.33px">Nicolas BOZABALIAN</div>
<div class="t td" style="left:966px;top:753.0px;letter-spacing:.22px">26 / 05 / 2025</div>
<svg class="abs" style="left:1214px;top:749.6px" width="14" height="14" viewBox="0 0 14 14" fill="none"><rect x=".5" y=".5" width="13" height="13" rx="1.600" fill="#f6f8fe" stroke="#a3b3dc" stroke-width=".7" stroke-dasharray="1.300 1"/><path d="M7 2.800v4" stroke="#2a3442" stroke-width="1.400"/><path d="M4.500 5.900h5L7 8.500z" fill="#2a3442"/><path d="M3 9.200v2h8v-2" stroke="#2a3442" stroke-width="1.400" stroke-linejoin="round"/></svg>
<svg class="abs" style="left:1247px;top:749.2px" width="16" height="15" viewBox="0 0 16 15" fill="none" stroke="#1f2733" stroke-width="1.300" stroke-linejoin="round"><path d="M1 7.500C2.800 4 5.300 2.600 8 2.600S13.200 4 15 7.500C13.200 11 10.700 12.400 8 12.400S2.800 11 1 7.500z"/><circle cx="8" cy="7.500" r="2.100"/></svg>
<svg class="abs" style="left:1287.500px;top:750.6px" width="11" height="12" viewBox="0 0 11 12" fill="none" stroke="#d55a4a" stroke-width=".95" stroke-linecap="round" stroke-linejoin="round"><path d="M1.700 3h7.600M4.200 2.800c0-1 .5-1.400 1.300-1.400s1.300.4 1.300 1.400M2.300 3.200l.6 5.800c.1.800.6 1.200 1.300 1.200h2.600c.7 0 1.200-.4 1.300-1.200l.6-5.800"/></svg>
<div class="abs" style="left:169px;top:776.7px;width:1144px;height:1px;background:#ebeef5"></div>
<div class="abs" style="left:180.400px;top:792.9px;width:4.800px;height:4.800px;border-radius:50%;background:#62c07f"></div>
<div class="t td" style="left:188.500px;top:793.7px">Profil de risque</div>
<div class="t td" style="left:689px;top:793.7px">Réglementaire</div>
<div class="t td" style="left:770.500px;top:793.7px;letter-spacing:-.33px">Nicolas BOZABALIAN</div>
<div class="t td" style="left:966px;top:793.7px;letter-spacing:.22px">26 / 05 / 2025</div>
<svg class="abs" style="left:1214px;top:790.3px" width="14" height="14" viewBox="0 0 14 14" fill="none"><rect x=".5" y=".5" width="13" height="13" rx="1.600" fill="#f6f8fe" stroke="#a3b3dc" stroke-width=".7" stroke-dasharray="1.300 1"/><path d="M7 2.800v4" stroke="#2a3442" stroke-width="1.400"/><path d="M4.500 5.900h5L7 8.500z" fill="#2a3442"/><path d="M3 9.200v2h8v-2" stroke="#2a3442" stroke-width="1.400" stroke-linejoin="round"/></svg>
<svg class="abs" style="left:1247px;top:789.9px" width="16" height="15" viewBox="0 0 16 15" fill="none" stroke="#1f2733" stroke-width="1.300" stroke-linejoin="round"><path d="M1 7.500C2.800 4 5.300 2.600 8 2.600S13.200 4 15 7.500C13.200 11 10.700 12.400 8 12.400S2.800 11 1 7.500z"/><circle cx="8" cy="7.500" r="2.100"/></svg>
<svg class="abs" style="left:1287.500px;top:791.3px" width="11" height="12" viewBox="0 0 11 12" fill="none" stroke="#d55a4a" stroke-width=".95" stroke-linecap="round" stroke-linejoin="round"><path d="M1.700 3h7.600M4.200 2.800c0-1 .5-1.400 1.300-1.400s1.300.4 1.300 1.400M2.300 3.200l.6 5.800c.1.800.6 1.200 1.300 1.200h2.600c.7 0 1.200-.4 1.300-1.200l.6-5.800"/></svg>

<!--OVERLAYS-->
<div class="abs" style="left:154.500px;top:766.100px;width:29.600px;height:29.600px;border-radius:50%;background:#4a596a;box-shadow:0 1px 3px rgba(0,0,0,.25)"></div>
<div class="t" style="left:164.800px;top:772.500px;font-size:15px;font-weight:700;color:#fff">?</div>
<div class="abs" style="left:1135px;top:778px;width:188px;height:40px;background:#fff;border-radius:3px 3px 0 0;box-shadow:0 0 6px rgba(30,40,60,.22)"></div>
<svg class="abs" style="left:1150px;top:789.500px" width="10" height="10" viewBox="0 0 10 10" fill="none" stroke="#3b66d4" stroke-width="1.100" stroke-linejoin="round"><path d="M1.800 1.600h4L8.400 4v4.400H1.800zM5.600 1.800v2.400h2.600"/></svg>
<div class="t" style="left:1164.800px;top:790.100px;font-size:9.300px;font-weight:700;color:#1c2431;letter-spacing:-.2px">Commentaires</div>
<svg class="abs" style="left:1298.500px;top:790px" width="9" height="9" viewBox="0 0 9 9" fill="none" stroke="#2a3442" stroke-width="1.200" stroke-linecap="round" stroke-linejoin="round"><path d="M2 5.600 4.500 3.200 7 5.600"/></svg>
<!-- scrollbar -->
<div class="abs" style="left:1344px;top:116px;width:14px;height:700px;background:#3d5a80"></div>
<div class="abs" style="left:1348px;top:119px;width:7.200px;height:306px;border-radius:4px;background:#24364b"></div>

</div></div>
</body>
</html>
